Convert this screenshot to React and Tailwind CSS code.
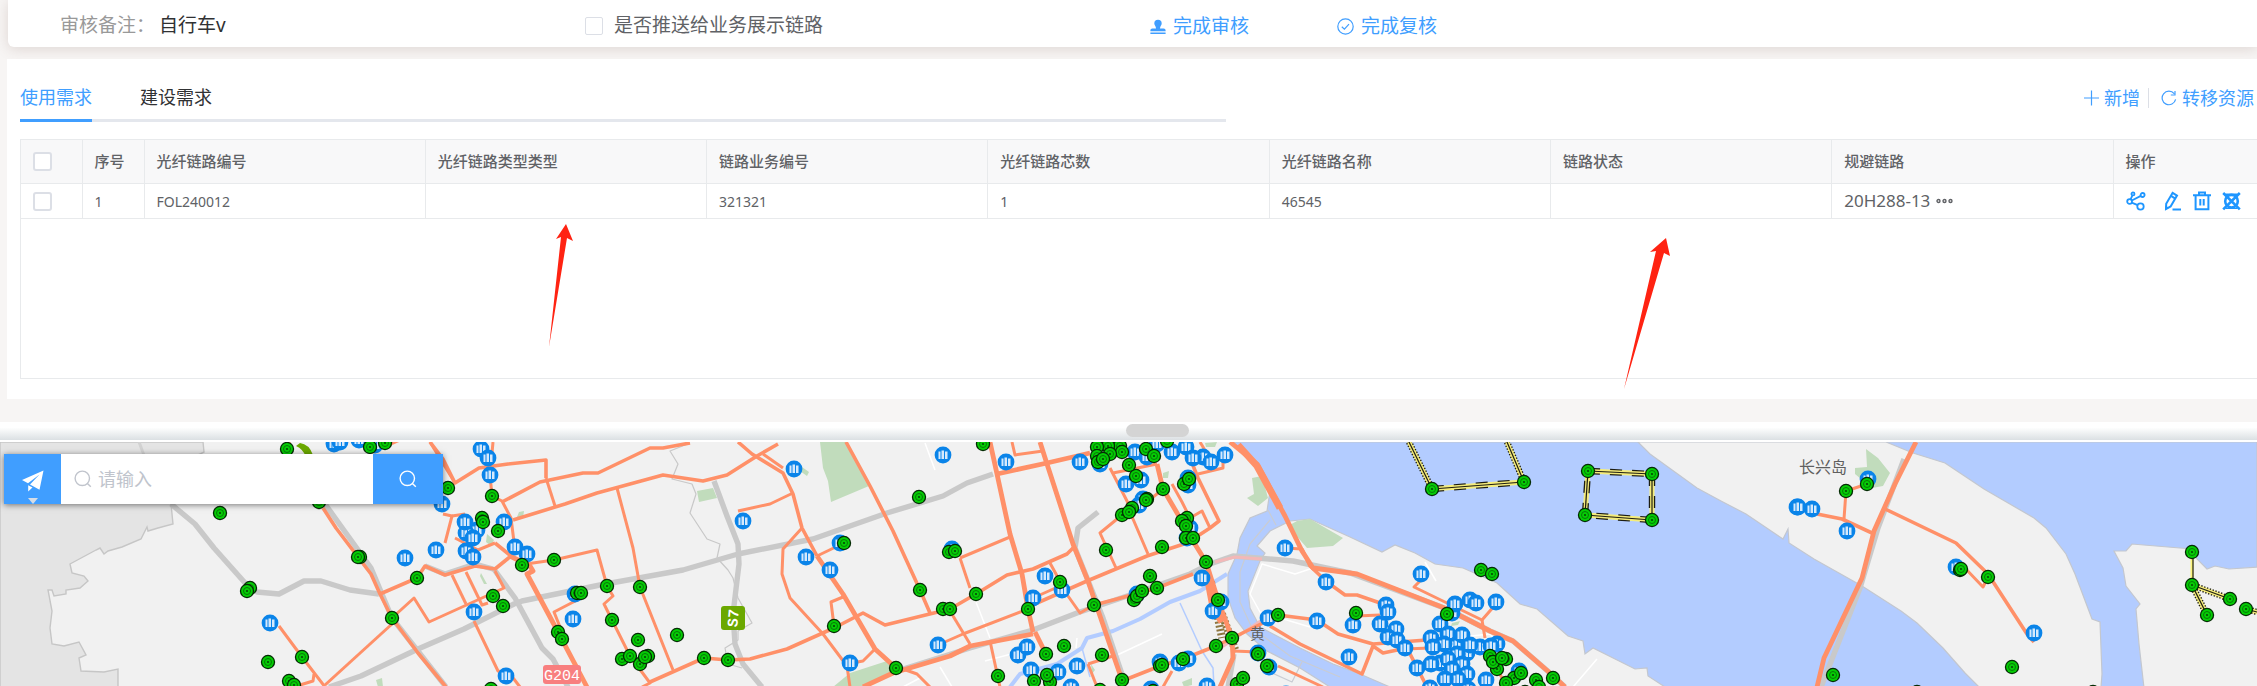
import React from "react";

const GREEN = [
  [287,7],[220,71],[319,60],[360,115],[358,115],[250,146],[247,149],[417,136],[392,176],[302,215],[268,220],[289,239],[294,243],
  [385,1],[370,5],[448,46],[492,54],[482,76],[483,80],[498,89],[522,123],[493,154],[503,164],[491,247],
  [554,118],[577,151],[581,151],[607,144],[640,145],[612,178],[558,190],[562,197],[638,198],[677,193],[622,217],[640,222],[648,214],[645,215],[630,214],
  [704,216],[728,218],[844,101],[919,55],[920,148],[943,167],[950,167],[834,184],[896,226],[949,110],[955,109],
  [983,2],[1028,167],[976,152],[1060,140],[1094,163],[1106,108],[1162,105],[1150,134],[1157,146],[1134,158],[1137,154],[1142,149],
  [1046,212],[1064,204],[1102,213],[998,234],[1034,239],[1050,240],[1047,233],[1100,248],[1122,238],[1160,224],[1162,223],[1183,217],
  [1216,204],[1232,196],[1218,158],[1206,120],[1187,76],[1182,79],[1186,84],[1186,96],[1193,96],[1163,47],[1184,42],[1189,37],
  [1147,57],[1146,58],[1132,66],[1122,73],[1129,70],[1136,34],[1129,23],[1146,7],[1154,14],[1167,-1],[1120,4],[1108,4],[1122,10],
  [1097,5],[1097,14],[1098,20],[1110,12],[1103,17],[1278,173],[1258,212],[1267,224],[1237,242],[1243,236],[1153,249],
  [1432,47],[1524,40],[1588,29],[1652,32],[1585,73],[1652,78],[1481,128],[1492,132],[1356,171],[1447,172],
  [1490,214],[1497,227],[1506,217],[1493,220],[1502,216],[1514,236],[1521,231],[1506,241],[1536,238],[1539,245],[1525,250],[1553,236],
  [1846,49],[1867,42],[1960,128],[1961,127],[1988,135],[2012,225],[1833,233],[2192,110],[2192,143],[2230,157],[2207,173],[2246,167],[1917,250],[2093,250],
];

const BLUE = [
  [334,2],[340,0],[359,-2],[375,3],[481,7],[488,16],[490,33],[442,62],[436,108],[405,116],[504,80],[477,88],[466,91],[465,80],[473,96],[466,109],[473,115],
  [515,105],[527,112],[270,181],[474,170],[506,234],[575,152],[573,177],[794,27],[743,79],[806,115],[840,101],[830,128],[850,221],[938,203],[943,13],
  [952,107],[1006,20],[1080,20],[1100,22],[1135,10],[1147,15],[1157,2],[1172,10],[1186,5],[1203,15],[1193,16],[1211,20],[1225,13],
  [1126,42],[1141,38],[1188,43],[1188,36],[1143,57],[1139,63],[1190,86],[1187,96],[1045,134],[1033,156],[1062,148],[1137,152],[1202,136],[1213,169],[1221,160],
  [1268,176],[1317,179],[1326,140],[1285,106],[1018,213],[1027,205],[1031,228],[1058,230],[1077,224],[1071,245],[1160,220],[1179,221],[1188,217],
  [1207,244],[1151,247],[1269,225],[1258,211],[1286,252],[1421,132],[1386,163],[1388,170],[1380,182],[1353,183],[1396,187],[1388,195],[1397,198],[1405,206],
  [1349,215],[1417,226],[1440,221],[1431,222],[1440,182],[1448,192],[1431,196],[1452,171],[1455,162],[1470,158],[1476,161],[1496,160],
  [1456,203],[1444,202],[1433,205],[1462,193],[1480,205],[1467,211],[1470,203],[1497,202],[1491,204],[1457,212],[1448,217],[1462,222],[1452,227],
  [1467,232],[1458,237],[1445,237],[1468,247],[1486,238],[1430,246],[1519,229],
  [1797,65],[1812,67],[1798,65],[1868,37],[1847,89],[1956,125],[2034,191],
];

const ROADS_THIN = [
  "392,176 414,156 429,180 504,146 495,129","452,133 466,162","466,130 482,163 488,161","392,182 325,243",
  "279,184 302,215 325,245","314,232 313,239 300,243","474,179 498,229 510,232 520,245","493,0 490,33 492,54 502,59 511,76 514,100",
  "546,36 555,64","617,46 633,106 640,145 673,228","802,86 783,107 782,132 790,156 823,192 847,224 850,245",
  "526,122 554,118 597,108 607,144 613,154 604,162 612,178 630,214 650,241 642,245","581,156 554,170 562,190","738,69 770,62 793,51",
  "763,12 783,26","817,114 844,101","834,184 831,160 843,155","875,207 863,219 852,221","903,227 917,232 930,245",
  "1012,0 1015,13 1043,9","960,116 1010,95","960,116 970,146","938,203 963,192 1028,167","950,169 970,202",
  "1210,86 1202,69 1190,76","1110,26 1127,59 1133,77 1148,112","1122,73 1100,91 1116,126","1147,60 1163,47",
  "1094,163 1080,171 1068,154 1050,121","1113,31 1157,22","1198,32 1223,26 1223,13","1172,42 1182,60 1190,76","1033,156 1060,144",
  "1356,174 1380,173","1278,224 1323,245","1422,137 1414,145 1482,178 1496,162","1482,178 1485,196","1405,207 1430,206",
  "1088,222 1113,214","1088,222 1097,245","990,199 1000,245","1163,245 1172,229","443,72 452,74 445,101","452,74 465,72","455,96 478,108 495,101",
  "1844,77 1846,49 1867,42","1963,124 1983,145 1988,135","1233,209 1258,210","1497,227 1507,245","1285,106 1302,107",
  "455,41 430,0","1200,0 1206,10","372,10 400,-2","290,0 285,6",
];

const ROADS_MID = [
  "323,66 336,86 358,115 371,132 380,152 392,176 418,211 446,245","380,152 417,136 425,124 445,133 475,124 495,127 511,114 495,101",
  "430,0 443,17 455,41 479,26 508,22 546,18 546,36","502,60 540,40 583,31 598,31 650,6 663,6 690,1",
  "513,78 565,62 597,51 663,33 703,39 727,33 757,14 778,2","650,240 704,216 728,218 750,217 787,207 834,186 863,171 885,183 950,167 976,152 1007,133 1033,127 1067,112 1073,106",
  "738,0 752,12 783,31 793,52 802,86 817,114","846,0 870,44 893,89 920,148 930,171","1028,165 1087,139 1147,114 1187,101 1210,86 1219,79 1198,36 1190,16",
  "1094,163 1117,157 1157,146 1193,132","1127,237 1160,224 1183,217 1216,204 1267,179","1302,107 1310,124 1327,140 1345,153 1357,153 1383,162",
  "1270,184 1300,202 1362,232 1373,204 1383,211 1407,206 1427,245","1278,173 1317,178 1338,192 1373,202 1427,198",
  "1885,67 1956,101 1988,132 2027,192 2034,200","1817,72 1842,77 1872,91",
];

const ROADS_WIDE = [
  "510,114 530,124 533,129 527,132 558,190 587,245","817,114 843,152 875,207 896,226","863,245 893,231 950,214 970,204 1033,192",
  "990,0 997,32 1010,92 1022,132 1028,167 1033,190","1035,190 1046,212","997,32 1047,21 1090,11","1040,0 1047,22 1073,102 1088,139 1100,174 1113,212 1122,238",
  "1157,22 1163,47 1180,76 1193,99 1206,120 1218,158 1232,196 1233,216 1220,245","1230,0 1257,22 1285,74 1302,109 1313,126 1350,131 1357,132 1447,167 1490,189 1513,199 1550,231 1565,245",
  "1916,0 1895,42 1874,89 1862,136 1824,216 1817,245",
];

const GRAY = [
  "171,62 195,82 214,106 246,142 257,150 279,152 304,139 321,139 350,148 379,152","329,245 361,234 418,207 464,187 514,162 522,159 600,143 683,128 738,112 813,97 887,71 943,54 967,41 993,32",
  "325,62 371,126 392,176 446,245","493,126 515,156 542,206 553,217 568,245","714,39 727,74 738,102 739,122 733,172 735,202 743,222 762,245",
  "900,228 970,206 1033,188 1077,171 1133,152 1190,132 1210,122 1233,114 1293,119 1350,131 1447,167 1490,189 1513,199 1550,231 1565,245",
  "1098,70 1078,86 1075,106 1103,176 1124,238","1904,17 1878,86 1860,146 1821,245","425,124 445,132 475,122 493,127","1234,212 1228,245",
];

const CABLES = [
  "1409,0 1432,47","1507,0 1524,40","1432,47 1524,40","1588,29 1652,32","1652,32 1652,78","1652,78 1585,73","1585,73 1588,29",
  "2192,143 2230,157","2192,143 2207,173","2246,167 2257,170",
];

function Lines({ items, color, width, dash }) {
  return (
    <g fill="none" stroke={color} strokeWidth={width} strokeLinejoin="round" strokeDasharray={dash}>
      {items.map((p, i) => <polyline key={i} points={p} />)}
    </g>
  );
}

function MapCanvas() {
  return (
    <svg viewBox="0 0 2257 245" className="block h-auto w-full" role="img" aria-label="地图">
      <defs>
        <g id="node">
          <circle r="7.2" fill="#032c03" />
          <circle r="5.9" fill="#05cc05" />
          <circle r="3.5" fill="none" stroke="#067a06" strokeWidth="1" />
          <circle r="1.1" fill="#034a03" />
        </g>
        <g id="site">
          <circle r="8.4" fill="#0a84e9" />
          <path d="M-4.500-3.500h2v7.500h-2zM-1.500-4.500h2.500v8.500h-2.500zM2-3.500h2.500v7.500h-2.500z" fill="#d5e9fc" />
        </g>
      </defs>
      <rect width="2257" height="245" fill="#f1f1f1" />
      <path d="M0 0H203L204 10 198 13 190 25 171 62 173 82 158 86 148 89 147 85 141 97 122 105 108 109 104 112 100 106 96 108 70 122 72 131 84 134 88 139 80 146 66 148 66 152 54 154 52 148 48 148 52 169 50 186 52 202 64 204 79 200 86 213 79 216 81 229 104 230 118 227 118 245H0Z" fill="#e4e4e4" stroke="#c6c6c6" strokeWidth="1.4" />
      <path d="M139 0 145 16" stroke="#d2d2d2" strokeWidth="3" />
      <path d="M1233 0 1257 22 1270 49 1267 69 1250 76 1240 96 1237 112 1228 132 1228 156 1235 176 1247 192 1267 209 1300 226 1330 245H1390L1360 232 1333 222 1300 206 1275 193 1260 185 1250 166 1248 149 1260 119 1265 111 1257 104 1270 89 1290 79 1310 77 1350 95 1382 110 1395 103 1415 111 1435 122 1463 126 1497 141 1520 162 1537 167 1568 194 1583 199 1585 212 1593 206 1635 227 1647 226 1648 234 1665 245H2257V0Z" fill="#b3ccff" stroke="#c3c7cf" strokeWidth="1.2" />
      <path d="M1638 0 1650 12 1697 46 1721 59 1746 72 1783 97 1788 87 1789 101 1814 117 1862 144 1901 169 1917 181 1943 206 1965 231 1979 245H2101L2102 232 2100 180 2092 177 2075 132 2066 112 2046 86 2034 76 1984 47 1945 21 1913 11 1886 0Z" fill="#f1f1f1" stroke="#c3c7cf" strokeWidth="1.2" />
      <path d="M2258 125 2229 127 2215 124 2207 127 2197 117 2192 107 2132 102 2126 109 2114 109 2123 126 2126 144 2140 162 2136 167 2139 202 2144 246H2258Z" fill="#f1f1f1" stroke="#c3c7cf" strokeWidth="1.2" />
      <g fill="#c1dcbc">
        <path d="M820 0 823 26 828 39 831 60 869 44 846 0ZM697 49 713 46 717 56 699 60ZM833 245 850 231 887 219 897 227 860 245ZM1252 36 1262 34 1268 56 1258 64 1247 56 1254 52Z" />
        <path d="M1288 84 1297 79 1310 77 1343 96 1333 104 1307 106ZM1866 7 1878 16 1890 31 1883 44 1872 46 1855 32 1855 26 1867 25ZM1205 1 1217 0 1215 5 1206 5ZM802 25 809 30 807 34 800 29ZM1163 31 1169 29 1168 36 1163 36ZM519 70 524 69 523 76 517 75ZM376 238 382 236 383 245 378 245ZM1182 240 1192 236 1192 243 1184 245Z" />
        <path d="M481 131 487 142 484 142 480 134ZM487 92 494 98 491 104 486 100ZM1452 181 1460 179 1458 183 1451 184ZM1091 222 1095 228 1092 232Z" />
      </g>
      <Lines color="#b3ccff" width="4" items={["1227,132 1200,149 1170,160 1140,177 1113,189 1087,196 1082,206 1057,222 1020,232 1010,245"]} />
      <Lines color="#b3ccff" width="1.5" items={["1180,161 1202,209 1213,226 1214,245", "1082,206 1090,235"]} />
      <Lines color="#ffffff" width="1.5" items={["925,1 935,28","976,160 990,196","1113,215 1162,192","1076,206 1077,196","1250,152 1262,122 1295,132 1313,126","1250,152 1260,170 1310,185","1573,245 1597,217","940,225 952,245","903,245 920,236","985,219 1030,207","1452,196 1490,192 1530,240","1425,120 1436,139"]} />
      <Lines color="#c9ccd3" width="1.2" items={["1268,68 1276,83","1270,78 1250,102 1240,130 1240,160 1252,186 1290,214 1340,235","1302,220 1292,240 1270,230"]} />
      <Lines color="#c8c8c8" width="1.2" items={["690,1 670,9 678,22 672,37 692,42 696,52 690,71 707,97 720,102 717,116 728,128 733,136 738,156 752,181 738,189 738,198 725,206 728,222 742,226"]} />
      <Lines color="#c9c9c9" width="5.4" items={GRAY} />
      <Lines color="#f3b8b8" width="3" items={["1215,120 1235,115 1262,117","1222,205 1262,178"]} />
      <Lines color="#8d7640" width="8" dash="2 2" items={["1211,140 1222,196","1222,172 1236,210"]} />
      <Lines color="#ff9068" width="3" items={ROADS_THIN} />
      <Lines color="#ff9068" width="3.6" items={ROADS_MID} />
      <Lines color="#ff9068" width="4.8" items={ROADS_WIDE} />
      <Lines color="#ff9068" width="7" items={["1206,128 1213,165 1222,180","1238,3 1257,24 1280,66"]} />
      <Lines color="#fbf37c" width="5" items={CABLES} />
      <Lines color="#fbf37c" width="3" items={["2192,110 2192,143"]} />
      <Lines color="#1d1d12" width="6.4" dash="12 10" items={CABLES.slice(2, 7)} />
      <Lines color="#1d1d12" width="6.4" dash="1.4 1.6" items={[...CABLES.slice(0, 2), ...CABLES.slice(7)]} />
      <Lines color="#f3ea7a" width="3.8" items={CABLES} />
      <Lines color="#1d1d12" width="1.2" items={[...CABLES, "2193,110 2193,143"]} />
      <path d="M296 4q7 3 10 11l7-2q-4-11-13-12z" fill="#6ba800" />
      <g fontFamily='"Noto Sans CJK SC", sans-serif' fill="#5f5f5f">
        <text x="1799" y="31" fontSize="16">长兴岛</text>
        <text x="1250" y="197" fontSize="15">黄</text>
      </g>
      <rect x="543" y="223" width="38" height="19" rx="3" fill="#f87f7f" />
      <text x="562" y="238" fontSize="15" textAnchor="middle" fill="#fff" fontFamily='"Liberation Mono", monospace'>G204</text>
      <g transform="translate(733 176)">
        <rect x="-12" y="-12" width="24" height="24" rx="3" fill="#6ba800" />
        <text transform="rotate(-85)" y="5" fontSize="15" fontWeight="700" textAnchor="middle" fill="#fff" fontFamily='"Liberation Mono", monospace'>S7</text>
      </g>
      {BLUE.map(([x, y], i) => <use key={i} href="#site" x={x} y={y} />)}
      {GREEN.map(([x, y], i) => <use key={i} href="#node" x={x} y={y} />)}
    </svg>
  );
}

const stroke = { fill: "none", stroke: "currentColor" };

const StampIcon = () => (
  <svg width="16" height="16" viewBox="0 0 16 16" fill="currentColor" aria-hidden="true">
    <path d="M8 .8a3.700 3.700 0 0 1 3.700 3.700c0 1.800-1.700 2.700-1.700 5h3.600c1.200 0 2 .8 2 2v.8H.4v-.8c0-1.200.8-2 2-2H6c0-2.300-1.700-3.200-1.700-5A3.700 3.700 0 0 1 8 .8zM.4 13.400h15.200V15H.4z" />
  </svg>
);
const CheckIcon = () => (
  <svg width="17" height="17" viewBox="0 0 17 17" {...stroke} strokeWidth="1.2" aria-hidden="true">
    <circle cx="8.5" cy="8.5" r="7.7" />
    <path d="m4.8 8.700 2.600 2.500 4.600-5" />
  </svg>
);
const PlusIcon = () => (
  <svg width="15" height="16" viewBox="0 0 15 16" {...stroke} strokeWidth="1.2" aria-hidden="true">
    <path d="M7.500.5v15M0 8h15" />
  </svg>
);
const RefreshIcon = () => (
  <svg width="16" height="16" viewBox="0 0 16 16" {...stroke} strokeWidth="1.2" aria-hidden="true">
    <path d="M14.600 9.400A6.800 6.800 0 1 1 13.200 3.600M14 1v4h-4.200" />
  </svg>
);
const ShareIcon = () => (
  <svg width="20" height="20" viewBox="0 0 20 20" {...stroke} strokeWidth="1.8" aria-hidden="true">
    <circle cx="3.6" cy="10.5" r="2.4" /><circle cx="7" cy="2.9" r="1.5" /><circle cx="16.6" cy="4" r="2" /><circle cx="14.5" cy="15.5" r="3.2" />
    <path d="M4.600 8.300 6.400 4.400M5.800 9.500l9-4.600M5.700 11.600l6 2.600" />
  </svg>
);
const EditIcon = () => (
  <svg width="18" height="20" viewBox="0 0 18 20" {...stroke} strokeWidth="2" aria-hidden="true">
    <path d="M8.600 1.800 13 4.600 6.600 15.400 2 18l.2-5.300zM7 4.800l4.300 2.800M8.500 18.600h8.500" />
    <path d="m1.400 14.500 3.600 2.200-3.800 2.300z" fill="currentColor" stroke="none" />
  </svg>
);
const TrashIcon = () => (
  <svg width="18" height="20" viewBox="0 0 18 20" {...stroke} strokeWidth="2" aria-hidden="true">
    <path d="M0 4.200h18M6 4V1.500h6V4M2.600 4.500v13.700h12.800V4.500M7.300 8v6.500M10.700 8v6.500" />
  </svg>
);
const CrossIcon = () => (
  <svg width="19" height="20" viewBox="0 0 19 20" {...stroke} strokeWidth="2.6" aria-hidden="true">
    <path d="m1.200 2 16.600 16.400M17.800 2 1.200 18.400" /><circle cx="9.5" cy="10.2" r="6.3" />
    <path d="M3.500 3.200h12M3.500 17.200h12" strokeWidth="1.6" />
  </svg>
);
const SearchIcon = () => (
  <svg width="18" height="18" viewBox="0 0 18 18" {...stroke} strokeWidth="1.4" aria-hidden="true">
    <circle cx="8.3" cy="8.3" r="7.2" /><path d="m13.400 13.400 3.400 3.400" />
  </svg>
);

const COLUMNS = ["光纤链路编号", "光纤链路类型类型", "链路业务编号", "光纤链路芯数", "光纤链路名称", "链路状态", "规避链路"];
const VALUES = ["FOL240012", "", "321321", "1", "46545", ""];

const boxClass = "block h-[19px] w-[19px] appearance-none rounded-[3px] border-2 border-[#dcdfe6] bg-white checked:bg-[#409eff]";

function LinkTable() {
  return (
    <table className="w-full table-fixed border-collapse text-left text-[#606266]">
      <colgroup>
        <col className="w-[61px]" />
        <col className="w-[62px]" />
        {COLUMNS.map((c) => <col key={c} />)}
        <col className="w-[144px]" />
      </colgroup>
      <thead>
        <tr className="h-[44px] bg-[#f8f8f9] text-[15px] [&>th]:border [&>th]:border-[#e8eaec] [&>th]:px-3 [&>th]:font-medium [&>th:last-child]:border-r-0">
          <th><input type="checkbox" aria-label="全选" className={boxClass} /></th>
          <th>序号</th>
          {COLUMNS.map((c) => <th key={c}>{c}</th>)}
          <th>操作</th>
        </tr>
      </thead>
      <tbody>
        <tr className="h-[35px] text-[14px] [&>td]:border [&>td]:border-[#e8eaec] [&>td]:px-3 [&>td:last-child]:border-r-0">
          <td><input type="checkbox" aria-label="选择第1行" className={boxClass} /></td>
          <td>1</td>
          {VALUES.map((v, i) => <td key={i}>{v}</td>)}
          <td>
            <div className="flex items-center gap-1.5 text-[17px] leading-6">
              20H288-13
              <button aria-label="更多">
                <svg width="17" height="6" viewBox="0 0 17 6" {...stroke} strokeWidth="1.4" aria-hidden="true">
                  <circle cx="2.5" cy="3" r="1.5" /><circle cx="8.5" cy="3" r="1.5" /><circle cx="14.5" cy="3" r="1.5" />
                </svg>
              </button>
            </div>
          </td>
          <td>
            <div className="flex items-center text-[#1e96ff]">
              <button aria-label="分享"><ShareIcon /></button>
              <button aria-label="编辑" className="ml-[18px]"><EditIcon /></button>
              <button aria-label="删除" className="ml-[11px]"><TrashIcon /></button>
              <button aria-label="解除" className="ml-[11px]"><CrossIcon /></button>
            </div>
          </td>
        </tr>
      </tbody>
    </table>
  );
}

export default function App() {
  return (
    <div className='flex w-full flex-col overflow-hidden bg-white font-["Noto_Sans","Noto_Sans_CJK_SC",sans-serif]'>
      <div className="bg-[#f7f5f4] pb-[23px]">
        <section className="relative ml-2 flex h-[47px] items-center rounded-bl-md bg-white pt-1 text-[19px] shadow-[0_2px_14px_rgba(110,70,60,0.18)]">
          <div className="flex w-[577px] shrink-0 gap-1 pl-[52px]">
            <span className="text-[#999999]">审核备注：</span>
            <span className="text-[#303133]">自行车v</span>
          </div>
          <label className="flex w-[565px] shrink-0 items-center gap-[11px] whitespace-nowrap text-[#606266]">
            <input type="checkbox" className="h-[18px] w-[18px] appearance-none rounded-[2px] border border-[#dcdfe6] bg-white checked:bg-[#409eff]" />
            是否推送给业务展示链路
          </label>
          <div className="flex gap-[88px] pt-[2px] whitespace-nowrap text-[#409eff]">
            <button className="flex items-center gap-[7px]"><StampIcon />完成审核</button>
            <button className="flex items-center gap-[7px]"><CheckIcon />完成复核</button>
          </div>
        </section>
        <section className="relative mt-3 ml-[7px] bg-white pl-[13px] pb-5">
          <div className="flex items-start text-[18px] leading-6">
            <nav className="flex grow-[54] basis-0 gap-[48px] border-b-[3px] border-[#e4e7ed] pt-[26px]">
              <button className="-mb-[3px] border-b-[3px] border-[#409eff] pb-[10px] text-[#409eff]">使用需求</button>
              <button className="-mb-[3px] border-b-[3px] border-transparent pb-[10px] text-[#303133]">建设需求</button>
            </nav>
            <div className="flex grow-[46] basis-0 items-center justify-end pt-[27px] pr-[3px] text-[#409eff]">
              <button className="flex items-center gap-[5px]"><PlusIcon />新增</button>
              <span className="mr-3 ml-2 h-5 w-px bg-[#dcdfe6]" />
              <button className="flex items-center gap-[5px]"><RefreshIcon />转移资源</button>
            </div>
          </div>
          <div className="mt-[17px] border-b border-l border-[#e8eaec] [&_td:first-child]:border-l-0 [&_th:first-child]:border-l-0">
            <LinkTable />
            <div className="relative h-[159px]">
              <svg className="absolute top-[5px] left-[23.6%]" width="24" height="124" viewBox="0 0 24 124" aria-hidden="true">
                <path d="M17 0 24 17 18 14 0 123 12 13 7 15Z" fill="#ff2312" />
              </svg>
              <svg className="absolute top-[19px] left-[71.7%]" width="48" height="152" viewBox="0 0 48 152" aria-hidden="true">
                <path d="M42 0 46 18 40 15 0 151 32 13 26 14Z" fill="#ff2312" />
              </svg>
            </div>
          </div>
        </section>
      </div>
      <div className="flex h-[18px] items-center justify-center bg-gradient-to-b from-white from-30% to-[#dbe0e3] pb-px pl-[58px]">
        <div role="separator" className="h-[13px] w-[63px] rounded-full bg-[#d4d4d4]" />
      </div>
      <main className="relative mt-[2px]">
        <MapCanvas />
        <form className="absolute top-3 left-1 flex h-[50px] w-[439px] text-[18px] shadow-[0_1px_6px_rgba(0,0,0,0.5)]" onSubmit={(e) => e.preventDefault()}>
          <button type="button" aria-label="定位" className="relative flex w-[57px] items-center justify-center bg-[#409eff] pt-1">
            <svg width="22" height="22" viewBox="0 0 22 22" fill="#fff" aria-hidden="true">
              <path d="M21.500.5 0 10l6 3.200L17.500 4.500 8 14.500l9.500 5.200zM6.200 15.200v6.300l4.300-4z" />
            </svg>
            <svg className="absolute bottom-0 left-6" width="10" height="6" viewBox="0 0 10 6" aria-hidden="true"><path d="M0 0h10L5 6z" fill="#d6dde6" /></svg>
          </button>
          <label className="flex min-w-0 flex-1 items-center gap-[6px] bg-white pl-[13px] text-[#c0c4cc]">
            <SearchIcon />
            <input type="text" placeholder="请输入" aria-label="搜索" className="min-w-0 flex-1 text-[#303133] outline-none placeholder:text-[#c0c4cc]" />
          </label>
          <button type="submit" aria-label="查询" className="flex w-[70px] items-center justify-center bg-[#409eff] text-white"><SearchIcon /></button>
        </form>
      </main>
    </div>
  );
}
